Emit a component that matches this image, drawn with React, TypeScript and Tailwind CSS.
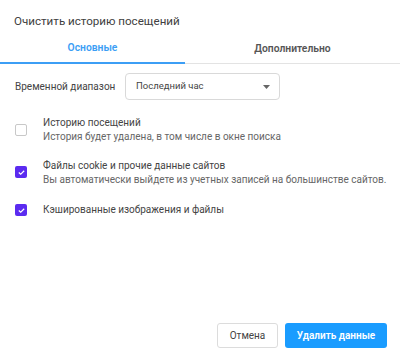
export default function App() {
  return (
    <div
      className="w-[400px] h-[364px] bg-white flex flex-col text-[#333]"
      style={{ fontFamily: 'Roboto, "Noto Sans", sans-serif' }}
    >
      <div className="px-[14px] pt-[12px] h-[34px] text-[11.6px] leading-[18px] text-[#404040] whitespace-nowrap">
        Очистить историю посещений
      </div>

      <div className="flex h-[30px] border-b border-[#e3e3e3]">
        <div className="w-[185px] flex items-center justify-center text-[10.3px] font-semibold text-[#3c9ef5] border-b-2 border-[#3c9ef5] -mb-px">
          Основные
        </div>
        <div className="flex-1 flex items-center justify-center text-[10.3px] font-semibold text-[#555]">
          Дополнительно
        </div>
      </div>

      <div className="flex items-center px-[15px] mt-[9px]">
        <span className="w-[110px] text-[10px] text-[#444] whitespace-nowrap">Временной диапазон</span>
        <div className="w-[155px] h-[27px] border border-[#d9d9d9] rounded-[4px] flex items-center justify-between pl-[10px] pr-[9px]">
          <span className="text-[9.5px] text-[#444]">Последний час</span>
          <svg width="7" height="4" viewBox="0 0 7 4">
            <path d="M0 0h7L3.5 4z" fill="#666" />
          </svg>
        </div>
      </div>

      <div className="flex flex-col px-[15px] mt-[16px] gap-[15px]">
        <div className="flex items-start">
          <div className="w-[12px] h-[12px] shrink-0 mt-[8px] mr-[16px] border border-[#c8c8c8] rounded-[2px] bg-white" />
          <div className="flex flex-col text-[10px] leading-[14px] whitespace-nowrap">
            <span className="text-[#444]">Историю посещений</span>
            <span className="text-[#666]">История будет удалена, в том числе в окне поиска</span>
          </div>
        </div>

        <div className="flex items-start">
          <div className="w-[12px] h-[12px] shrink-0 mt-[7px] mr-[16px] rounded-[2px] bg-[#5b2bf0] flex items-center justify-center">
            <svg width="7" height="5" viewBox="0 0 7 5">
              <path d="M0.8 2.5L2.7 4.2 6.2 0.8" fill="none" stroke="white" strokeWidth="1.2" />
            </svg>
          </div>
          <div className="flex flex-col text-[10px] leading-[14px] whitespace-nowrap">
            <span className="text-[#444]">Файлы cookie и прочие данные сайтов</span>
            <span className="text-[#666]">Вы автоматически выйдете из учетных записей на большинстве сайтов.</span>
          </div>
        </div>

        <div className="flex items-start mt-[1px]">
          <div className="w-[12px] h-[12px] shrink-0 mt-[1px] mr-[16px] rounded-[2px] bg-[#5b2bf0] flex items-center justify-center">
            <svg width="7" height="5" viewBox="0 0 7 5">
              <path d="M0.8 2.5L2.7 4.2 6.2 0.8" fill="none" stroke="white" strokeWidth="1.2" />
            </svg>
          </div>
          <span className="text-[10px] leading-[14px] text-[#444] whitespace-nowrap">Кэшированные изображения и файлы</span>
        </div>
      </div>

      <div className="flex-1" />

      <div className="flex justify-end gap-[7px] pr-[13px] pb-[16px]">
        <button className="h-[25px] w-[61px] border border-[#dcdcdc] rounded-[3px] text-[10px] text-[#444] bg-white">
          Отмена
        </button>
        <button className="h-[25px] w-[102px] rounded-[3px] text-[10px] font-semibold text-white bg-[#1a9cff]">
          Удалить данные
        </button>
      </div>
    </div>
  );
}
